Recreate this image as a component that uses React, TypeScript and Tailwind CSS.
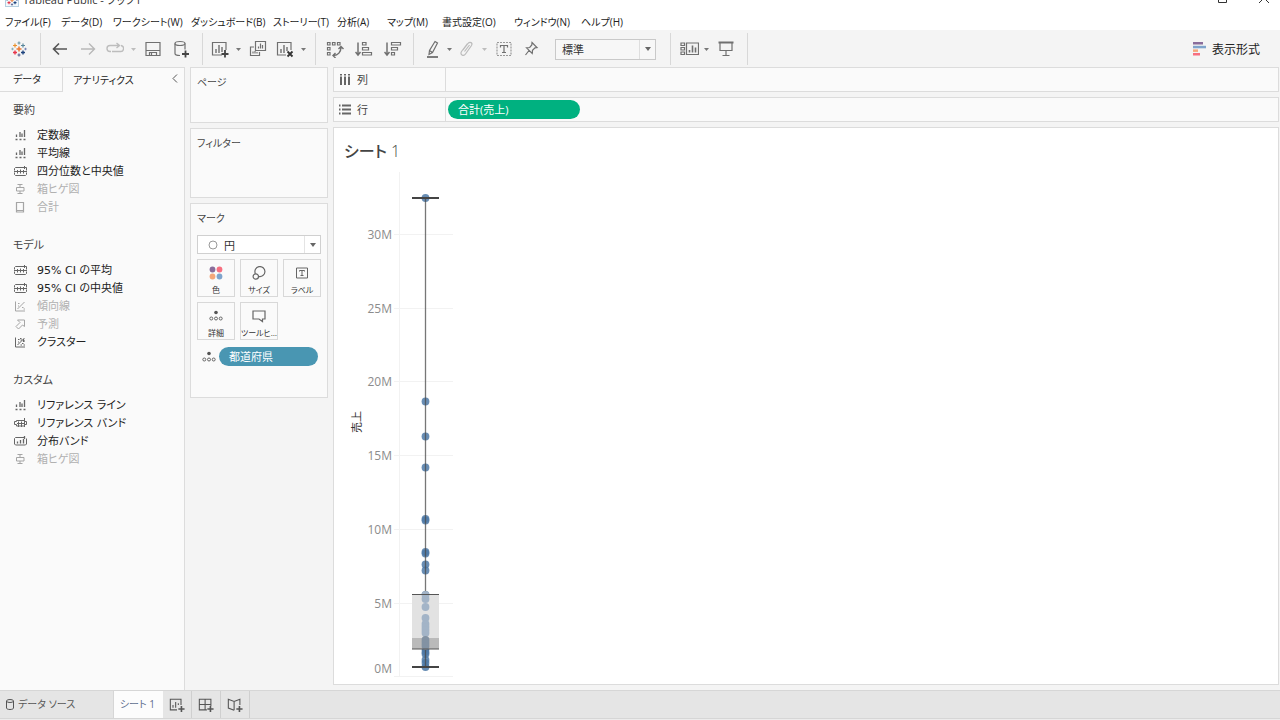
import React from 'react';

const menus = [
  { label: 'ファイル(F)', width: 'w-14' },
  { label: 'データ(D)', width: 'w-[52px]' },
  { label: 'ワークシート(W)', width: 'w-[78px]' },
  { label: 'ダッシュボード(B)', width: 'w-[82px]' },
  { label: 'ストーリー(T)', width: 'w-16' },
  { label: '分析(A)', width: 'w-[50px]' },
  { label: 'マップ(M)', width: 'w-[55px]' },
  { label: '書式設定(O)', width: 'w-[72px]' },
  { label: 'ウィンドウ(N)', width: 'w-[67px]' },
  { label: 'ヘルプ(H)', width: 'w-14' },
];

type Item = { label: string; icon: string; disabled?: boolean };

const sections: { title: string; items: Item[] }[] = [
  {
    title: '要約',
    items: [
      { label: '定数線', icon: 'line' },
      { label: '平均線', icon: 'line' },
      { label: '四分位数と中央値', icon: 'quartile' },
      { label: '箱ヒゲ図', icon: 'box', disabled: true },
      { label: '合計', icon: 'total', disabled: true },
    ],
  },
  {
    title: 'モデル',
    items: [
      { label: '95% CI の平均', icon: 'quartile' },
      { label: '95% CI の中央値', icon: 'quartile' },
      { label: '傾向線', icon: 'trend', disabled: true },
      { label: '予測', icon: 'forecast', disabled: true },
      { label: 'クラスター', icon: 'cluster' },
    ],
  },
  {
    title: 'カスタム',
    items: [
      { label: 'リファレンス ライン', icon: 'line' },
      { label: 'リファレンス バンド', icon: 'band' },
      { label: '分布バンド', icon: 'distribution' },
      { label: '箱ヒゲ図', icon: 'box', disabled: true },
    ],
  },
];

function AnalyticsIcon({ name }: { name: string }) {
  return (
    <svg width="14" height="12" viewBox="0 0 14 12" fill="none" stroke="currentColor" className="shrink-0">
      {name === 'line' && (
        <path d="M2.500 4.500v2.500M6 2v5M8 3.500V7M10.500 0v7M1.500 9.500h2M5.500 9.500h2M9.500 9.500h2" strokeWidth="1.300" />
      )}
      {name === 'quartile' && (
        <>
          <path d="M.500 4.500V2.500l1-1h11v3M0 5.500h13M.500 6.500v2l1 1h10l1-1v-2" />
          <path d="M3.500 4v3.500M6.500 3.500v4M9.500 4v3.500M10.500 0v3" />
        </>
      )}
      {name === 'box' && <path d="M3.500 .5h5M6 .5V3M2.500 3.500h7.500v3.500H2.500zM6 7v2.500M3.500 9.500h5" />}
      {name === 'total' && <path d="M2.500 .5h7v9.500h-7zM2.500 8.500h7" strokeWidth="1.200" />}
      {(name === 'trend' || name === 'cluster') && (
        <>
          <path d="M1.500 .5v9.500H11" />
          <path d="M3.500 8l7-7M4 2.500h1.500M8 6.500h1.500M9.500 8H11M4 5h1" />
          {name === 'cluster' && <path d="M6 1.500h1.500M6.500 3H8M9 4h2M6.500 8H8M9.500 2v3" strokeWidth="1.200" />}
        </>
      )}
      {name === 'forecast' && <path d="M3.500 1h7v6.500L8.500 6l-4 4L2 7.500l4-4z" />}
      {name === 'band' && (
        <>
          <path d="M2.500 2.500h8v1h2v3h-2v1.500h-8V6.500h-2v-3h2zM3 5.500h8" />
          <path d="M4.500 3.500v5.500M7.500 3.500v5.500M10.500 0v9" />
        </>
      )}
      {name === 'distribution' && (
        <>
          <path d="M10 1.500H1.500l-1 1V8l1 1h10l1-1V2.500" />
          <path d="M3.500 5.500v2M6.500 4v3.500M9.500 3v4.500M10.500 0v3" strokeWidth="1.300" />
        </>
      )}
    </svg>
  );
}

function Icon({ children, size = 18 }: { children: React.ReactNode; size?: number }) {
  return (
    <svg width={size} height={size} viewBox="0 0 18 18" fill="none" stroke="currentColor" strokeWidth="1.200" className="shrink-0">
      {children}
    </svg>
  );
}

function Tool({ label, className = 'w-7', children }: { label: string; className?: string; children: React.ReactNode }) {
  return (
    <button type="button" aria-label={label} className={`flex h-7 items-center justify-center ${className}`}>
      {children}
    </button>
  );
}

function Caret({ label, faded = false }: { label: string; faded?: boolean }) {
  return (
    <button type="button" aria-label={label} className={`flex h-7 w-[11px] items-center justify-center ${faded ? 'text-[#bdbdbd]' : 'text-[#777]'}`}>
      <svg width="5" height="3" viewBox="0 0 5 3"><path d="M0 0h5L2.500 3z" fill="currentColor" /></svg>
    </button>
  );
}

// Cluster of plus signs used in the title bar and the toolbar
function Logo() {
  return (
    <svg width="16" height="16" viewBox="0 0 16 16" fill="none" strokeWidth="1.200">
      <path d="M8 5.500v5M5.500 8h5" stroke="#eb7a33" strokeWidth="1.500" />
      <path d="M8 .5v3M6.500 2h3" stroke="#7099a6" />
      <path d="M8 12.500v3M6.500 14h3" stroke="#5b6591" />
      <path d="M4 2.500v4M2 4.500h4" stroke="#eb912c" />
      <path d="M12 2.500v4M10 4.500h4" stroke="#59879b" />
      <path d="M4 9.500v4M2 11.500h4" stroke="#e8364b" strokeWidth="1.400" />
      <path d="M12 9.500v4M10 11.500h4" stroke="#1f447e" strokeWidth="1.400" />
      <path d="M1.500 6.800v2.400M.3 8h2.400" stroke="#8aaebb" />
      <path d="M14.500 6.800v2.400M13.300 8h2.400" stroke="#7b87b5" />
    </svg>
  );
}

function DetailIcon() {
  return (
    <svg width="14" height="14" viewBox="0 0 14 14" fill="none" stroke="#666">
      <circle cx="7" cy="3.500" r="1.800" fill="#555" stroke="none" />
      <circle cx="2.300" cy="9.500" r="1.500" />
      <circle cx="7" cy="9.500" r="1.500" />
      <circle cx="11.700" cy="9.500" r="1.500" />
    </svg>
  );
}

function Toolbar() {
  const group = 'flex h-8 items-center border-r border-[#d8d8d8]';
  return (
    <div className="flex h-[37px] shrink-0 items-center bg-[#f4f4f4] pt-px text-[#707070]">
      <div className={`${group} w-[41px]`}>
        <Tool label="スタート ページ" className="w-[37px]"><Logo /></Tool>
      </div>
      <div className={`${group} pl-[5px] pr-[7px]`}>
        <Tool label="元に戻す">
          <Icon><path d="M16 9H2.500M8 3.500L2.500 9 8 14.500" stroke="#555" strokeWidth="1.600" /></Icon>
        </Tool>
        <Tool label="やり直し">
          <Icon><path d="M2 9h13.500M10 3.500L15.500 9 10 14.500" stroke="#b8b8b8" strokeWidth="1.400" /></Icon>
        </Tool>
        <Tool label="再生" className="w-[26px]">
          <Icon><path d="M5 11.500H4a3 3 0 0 1 0-6h9M10.500 3l3 2.500-3 2.500M15 5.500a3 3 0 0 1-1 6H6" stroke="#bdbdbd" strokeWidth="1.400" /></Icon>
        </Tool>
        <Caret label="再生メニュー" faded />
        <Tool label="保存">
          <Icon><path d="M2 2.500h14v13H2zM2 10.500h14M5.500 15.500v-3h7v3M7.500 13v2" /></Icon>
        </Tool>
        <Tool label="新しいデータ ソース">
          <Icon>
            <ellipse cx="8" cy="3.500" rx="5" ry="2" />
            <path d="M3 3.500v10c0 1.200 2 2 5 2M13 3.500v6" />
            <path d="M13.500 10.500v7M10 14h7" stroke="#444" strokeWidth="1.800" />
          </Icon>
        </Tool>
      </div>
      <div className={`${group} pl-1 pr-1.5`}>
        <Tool label="新しいワークシート" className="w-[26px]">
          <Icon>
            <path d="M11 15H1.500V2.500H15V10" />
            <path d="M5 13V9M8 13V5M11 12V7" strokeWidth="1.400" />
            <path d="M14 10v7.500M10.500 14h7" stroke="#444" strokeWidth="1.800" />
          </Icon>
        </Tool>
        <Caret label="新規メニュー" />
        <Tool label="複製">
          <Icon>
            <path d="M6.500 1.500h10v9h-10zM5 7H1.500v8.500h9V12" />
            <path d="M9.500 8.500V6.500M11.500 8.500v-5M13.500 8.500V5M4 13.500v-2M6 13.500V11M8 13.500V12" />
          </Icon>
        </Tool>
        <Tool label="シートのクリア" className="w-[26px]">
          <Icon>
            <path d="M10 15H1.500V2.500H15V10" />
            <path d="M5 13V9M8 13V5M11 11V7" strokeWidth="1.400" />
            <path d="M11.500 11.500l5 5M16.500 11.500l-5 5" stroke="#333" strokeWidth="1.800" />
          </Icon>
        </Tool>
        <Caret label="クリア メニュー" />
      </div>
      <div className={`${group} pl-1 pr-1.5`}>
        <Tool label="行と列の交換" className="w-[29px]">
          <Icon>
            <path d="M1.500 2.500H4V5H1.500zM6.500 2.500H9V5H6.500zM11.500 2.500H14V5h-2.500zM1.500 7.500H4V10H1.500zM1.500 12.500H4V15H1.500z" />
            <path d="M15 7c0 5-3 8.500-7.500 8.500M12.500 9L15 6.500 17.500 9M9.500 13L7 15.500 9.500 18" strokeWidth="1.400" />
          </Icon>
        </Tool>
        <Tool label="昇順で並べ替え" className="w-[29px]">
          <Icon>
            <path d="M3 2.500v12M.500 12L3 15l2.500-3" strokeWidth="1.500" />
            <path d="M7.500 2.500h3.500v2.500H7.500zM7.500 7.500h6V10h-6zM7.500 12.500h9V15h-9z" />
          </Icon>
        </Tool>
        <Tool label="降順で並べ替え" className="w-[29px]">
          <Icon>
            <path d="M3 2.500v12M.500 12L3 15l2.500-3" strokeWidth="1.500" />
            <path d="M7.500 2.500h9V5h-9zM7.500 7.500h6V10h-6zM7.500 12.500h3V15h-3z" />
          </Icon>
        </Tool>
      </div>
      <div className={`${group} pl-1.5 pr-3.5`}>
        <Tool label="ハイライト" className="w-6">
          <Icon>
            <path d="M12 1.500l2.500 1.500-5 9.500-3.500 2 .5-4zM6.500 10.500l3 2" />
            <path d="M4 17h11" strokeWidth="1.800" />
          </Icon>
        </Tool>
        <Caret label="ハイライト メニュー" />
        <Tool label="メンバーのグループ化" className="w-6">
          <Icon>
            <path d="M5 10l5-6.500c2-2.500 5-.5 3.500 2L7.500 14c-2 3-6 .5-4-2.500l6-8M6.500 11.500l5-6.500" stroke="#bbb" />
          </Icon>
        </Tool>
        <Caret label="グループ メニュー" faded />
        <Tool label="マーク ラベルの表示">
          <Icon>
            <path d="M2 2.500h14v13H2z" strokeDasharray="2 1" stroke="#999" />
            <path d="M5.500 7.500V5.500h7v2M9 5.500v7M7 12.500h4" />
          </Icon>
        </Tool>
        <Tool label="軸の固定" className="w-[26px]">
          <Icon><path d="M10 2.500l5 5-2 .3-2.500 2.500-.3 3.200L4.500 7.800l3.200-.3L9.800 5zM7 10.500L3.500 15" /></Icon>
        </Tool>
        <label className="relative ml-[11px] flex items-center">
          <span className="sr-only">表示サイズ</span>
          <select className="h-[21px] w-[101px] appearance-none rounded-none border border-[#c9c9c9] bg-[#f7f7f7] py-0 pl-1.5 font-['Noto_Sans_CJK_JP',sans-serif] text-[11px] leading-4 text-[#333]">
            <option>標準</option>
            <option>幅を合わせる</option>
            <option>高さを合わせる</option>
            <option>ビュー全体</option>
          </select>
          <span className="pointer-events-none absolute right-px flex h-[19px] w-4 items-center justify-center border-l border-[#dedede]">
            <svg width="6" height="4" viewBox="0 0 6 4"><path d="M0 0h6L3 4z" fill="#666" /></svg>
          </span>
        </label>
      </div>
      <div className={`${group} pl-1.5 pr-[7px]`}>
        <Tool label="カードの表示/非表示" className="w-6">
          <svg width="19" height="16" viewBox="0 0 19 16" fill="none" stroke="currentColor" strokeWidth="1.200">
            <path d="M1 2h3.500v2.500H1zM1 6.500h3.500V9H1zM1 11h3.500v2.500H1zM6.500 2h12v11.500h-12z" />
            <path d="M9.500 11.500V9M12.500 11.500v-7M15.500 11.500v-5" strokeWidth="1.600" />
          </svg>
        </Tool>
        <Caret label="カード メニュー" />
        <Tool label="プレゼンテーション モード">
          <Icon>
            <path d="M1.500 2.500h15" strokeWidth="2" />
            <path d="M3 3v7.500h12V3M9 10.500v5M5.500 15.500h7" />
          </Icon>
        </Tool>
      </div>
      <button type="button" className="ml-auto flex items-center gap-[5px] pr-5 text-xs text-[#222]">
        <svg width="14" height="14" viewBox="0 0 14 14">
          <path d="M0 0h10v2.500H0z" fill="#8a6d9b" />
          <path d="M0 3.800h13v2.500H0z" fill="#7fa4cc" />
          <path d="M0 7.400h5v2.500H0z" fill="#f5a77a" />
          <path d="M0 11h7v2.500H0z" fill="#f76f80" />
        </svg>
        <span className="pt-0.5">表示形式</span>
      </button>
    </div>
  );
}

function Sidebar() {
  return (
    <aside className="w-[185px] shrink-0 border-r border-t border-[#dcdcdc] bg-[#fafafa]">
      <div className="flex h-6 text-[10px] text-[#222]">
        <button type="button" className="w-[63px] border-b border-r border-[#dcdcdc] pr-2">データ</button>
        <button type="button" className="pl-2.5">アナリティクス</button>
        <button type="button" aria-label="折りたたむ" className="ml-auto pb-1 pr-1.5 text-[#555]">
          <svg width="6" height="9" viewBox="0 0 6 9" fill="none" stroke="currentColor"><path d="M5 .5l-4 4 4 4" /></svg>
        </button>
      </div>
      <div className="flex flex-col gap-[19px] pt-[9px]">
        {sections.map((section) => (
          <section key={section.title} className="flex flex-col gap-2">
            <h2 className="pl-[13px] text-[11px] leading-[18px] text-[#444]">{section.title}</h2>
            <ul>
              {section.items.map((item) => (
                <li key={item.label}>
                  <button
                    type="button"
                    disabled={item.disabled}
                    className={`flex h-[18px] items-center gap-[9px] whitespace-nowrap pl-3.5 font-['DejaVu_Sans','Noto_Sans_CJK_JP',sans-serif] text-[11px] ${item.disabled ? 'text-[#b0b0b0]' : 'text-[#222]'}`}
                  >
                    <span className={item.disabled ? 'text-[#a5a5a5]' : 'text-[#666]'}>
                      <AnalyticsIcon name={item.icon} />
                    </span>
                    {item.label}
                  </button>
                </li>
              ))}
            </ul>
          </section>
        ))}
      </div>
    </aside>
  );
}

function MarkButton({ label, children }: { label: string; children: React.ReactNode }) {
  return (
    <button type="button" className="flex h-[38px] flex-col items-center justify-between overflow-hidden whitespace-nowrap border border-[#d8d8d8] bg-[#fafafa] pt-1.5 text-[8px] leading-3 text-[#333]">
      {children}
      {label}
    </button>
  );
}

function Cards() {
  const card = 'border border-[#dcdcdc] bg-[#fafafa] px-1.5 pt-1.5 text-[10px] leading-4 text-[#444]';
  return (
    <div className="flex w-[138px] shrink-0 flex-col gap-[5px]">
      <section className={`${card} h-14`}><h2>ページ</h2></section>
      <section className={`${card} h-[70px]`}><h2>フィルター</h2></section>
      <section className={`${card} pb-[31px]`}>
        <h2>マーク</h2>
        <label className="relative mt-[9px] flex items-center">
          <span className="sr-only">マーク タイプ</span>
          <select className="h-[19px] w-full appearance-none border border-[#d0d0d0] bg-white py-0 pl-[26px] font-['Noto_Sans_CJK_JP',sans-serif] text-[11px] leading-4 text-[#333]">
            <option>円</option>
            <option>棒</option>
            <option>線</option>
          </select>
          <svg width="10" height="10" viewBox="0 0 10 10" className="pointer-events-none absolute left-[11px]">
            <circle cx="5" cy="5" r="4" fill="none" stroke="#999" />
          </svg>
          <span className="pointer-events-none absolute right-px flex h-[17px] w-4 items-center justify-center border-l border-[#e4e4e4]">
            <svg width="6" height="4" viewBox="0 0 6 4"><path d="M0 0h6L3 4z" fill="#666" /></svg>
          </span>
        </label>
        <div className="mt-[5px] grid grid-cols-3 gap-[5px]">
          <MarkButton label="色">
            <svg width="14" height="14" viewBox="0 0 14 14">
              <circle cx="3.500" cy="3.500" r="2.900" fill="#8a6d9b" />
              <circle cx="10.500" cy="3.500" r="2.900" fill="#f76f80" />
              <circle cx="3.500" cy="10.500" r="2.900" fill="#f5a77a" />
              <circle cx="10.500" cy="10.500" r="2.900" fill="#7fa4cc" />
            </svg>
          </MarkButton>
          <MarkButton label="サイズ">
            <svg width="14" height="14" viewBox="0 0 14 14" fill="none" stroke="#666" strokeWidth="1.200">
              <path d="M3.400 7.700a5 5 0 1 1 3.200 2.700" />
              <circle cx="3.800" cy="10.500" r="2.700" />
            </svg>
          </MarkButton>
          <MarkButton label="ラベル">
            <svg width="14" height="14" viewBox="0 0 14 14" fill="none" stroke="#666">
              <path d="M1.500 2h11v10h-11zM4.500 5.500v-1h5v1M7 4.500v5M5.500 9.500h3" />
            </svg>
          </MarkButton>
          <MarkButton label="詳細"><DetailIcon /></MarkButton>
          <MarkButton label="ツールヒ…">
            <svg width="14" height="14" viewBox="0 0 14 14" fill="none" stroke="#666" strokeWidth="1.200">
              <path d="M1 2h12v8h-2.500v2.500L7 10H1z" />
            </svg>
          </MarkButton>
        </div>
        <div className="mt-[7px] flex items-center gap-[3px] pl-[5px] pr-[3px]">
          <DetailIcon />
          <button type="button" className="h-[19px] flex-1 rounded-full bg-[#4996b2] pl-2.5 text-left text-[11px] text-white">都道府県</button>
        </div>
      </section>
    </div>
  );
}

function Shelf({ label, icon, children }: { label: string; icon: React.ReactNode; children?: React.ReactNode }) {
  return (
    <div className="flex h-[25px] shrink-0 items-center border border-[#dcdcdc] bg-[#fafafa]">
      <div className="flex h-full w-28 items-center gap-1.5 border-r border-[#dcdcdc] pl-[5px] text-[11px] text-[#444]">
        {icon}
        <span className="pt-0.5">{label}</span>
      </div>
      {children}
    </div>
  );
}

const ticks = [
  { label: '30M', y: 65 },
  { label: '25M', y: 139 },
  { label: '20M', y: 212 },
  { label: '15M', y: 286 },
  { label: '10M', y: 360 },
  { label: '5M', y: 434 },
];

const marks = [
  29, 232.500, 267.500, 298.500, 350, 351.500, 383, 384.500, 395.500, 401.500, 426, 429.500, 438, 449, 453,
  458, 461, 464, 471, 474, 477, 480, 483, 485, 491, 494, 498,
];
const innerMarks = [426, 430, 438, 449, 455, 458, 461, 464, 471, 474, 477];

function BoxPlot() {
  return (
    <svg width="130" height="512" viewBox="0 0 130 512" className="font-['Open_Sans',sans-serif]" role="img" aria-label="売上の箱ヒゲ図">
      {ticks.map((tick) => (
        <g key={tick.label}>
          <path d={`M60 ${tick.y + 0.5}h59`} stroke="#f2f2f2" />
          <text x="58" y={tick.y + 5} textAnchor="end" fontSize="12" fill="#8c8c8c">{tick.label}</text>
        </g>
      ))}
      <text x="58" y="504" textAnchor="end" fontSize="12" fill="#8c8c8c">0M</text>
      <path d="M60 507.500h59M65.500 3v505" stroke="#f2f2f2" fill="none" />
      <text transform="translate(27 264) rotate(-90)" fontSize="11" fill="#333" className="font-['Noto_Sans_CJK_JP',sans-serif]">売上</text>
      {marks.map((y) => <circle key={y} cx="91.500" cy={y} r="3.900" fill="#4e79a7" fillOpacity="0.850" />)}
      <path d="M91.500 29v397M91.500 480v18" stroke="#4a4a4a" strokeOpacity="0.750" strokeWidth="1.300" />
      <path d="M78 425h27v44H78z" fill="#e2e2e2" />
      <path d="M78 469h27v11H78z" fill="#bababa" />
      {innerMarks.map((y) => <circle key={y} cx="91.500" cy={y} r="3.900" fill={y > 468 ? '#8292a3' : '#a3b4c7'} />)}
      <path d="M78 425.500h27M78 480h27" stroke="#555" strokeWidth="1.200" />
      <path d="M78 29h27M78 498h27" stroke="#444" strokeWidth="1.800" />
    </svg>
  );
}

function Worksheet() {
  return (
    <main className="flex min-w-0 flex-1 flex-col gap-[5px]">
      <Shelf
        label="列"
        icon={<svg width="12" height="12" viewBox="0 0 12 12" stroke="#666" strokeWidth="2"><path d="M2 0v1.500M6 0v1.500M10 0v1.500M2 2.500V11M6 2.500V11M10 2.500V11" /></svg>}
      />
      <Shelf
        label="行"
        icon={<svg width="12" height="12" viewBox="0 0 12 12" stroke="#666" strokeWidth="2"><path d="M0 1.500h1.500M0 5.500h1.500M0 9.500h1.500M3 1.500h9M3 5.500h9M3 9.500h9" /></svg>}
      >
        <button type="button" className="ml-0.5 h-[19px] w-[132px] rounded-full bg-[#00b180] pl-2.5 pt-0.5 text-left text-[11px] text-white">合計(売上)</button>
      </Shelf>
      <section className="flex-1 overflow-hidden border border-[#dcdcdc] bg-white">
        <h1 className="pl-2.5 pt-[11px] text-base font-medium leading-6 text-[#444]">シート <span className="font-light">1</span></h1>
        <div className="pt-1.5"><BoxPlot /></div>
      </section>
    </main>
  );
}

function SheetTabs() {
  const add = 'flex w-[29px] items-center justify-center border-r border-[#cfcfcf]';
  return (
    <nav className="flex h-[29px] shrink-0 border-y border-[#d6d6d6] bg-[#e5e5e5] text-[10px] text-[#555]">
      <button type="button" className="flex w-[114px] items-center gap-1 border-r border-[#d6d6d6] pl-1.5">
        <svg width="8" height="11" viewBox="0 0 8 11" fill="none" stroke="currentColor">
          <ellipse cx="4" cy="2" rx="3.500" ry="1.500" />
          <path d="M.5 2v7c0 2 7 2 7 0V2" />
        </svg>
        データ ソース
      </button>
      <button type="button" className="w-[49px] bg-[#fcfcfc] pr-0.5 text-[#5f6f8f]">シート 1</button>
      <button type="button" aria-label="新しいワークシート" className={add}>
        <Icon size={16}><path d="M9 14.500H1.500v-12h12V9M4.500 12V9M7.500 12V5.500M10.500 9V7" /><path d="M14 10v7M10.500 13.500h7" strokeWidth="1.800" /></Icon>
      </button>
      <button type="button" aria-label="新しいダッシュボード" className={add}>
        <Icon size={16}><path d="M10 14.500H1.500v-12h13V10M1.500 8.500h13M8 2.500v12" /><path d="M14 10v7M10.500 13.500h7" strokeWidth="1.800" /></Icon>
      </button>
      <button type="button" aria-label="新しいストーリー" className={add}>
        <Icon size={16}><path d="M8 15l-6.500-2.500v-10L8 5l6.500-2.500V9M8 5v10" /><path d="M14 10v7M10.500 13.500h7" strokeWidth="1.800" /></Icon>
      </button>
    </nav>
  );
}

export default function App() {
  return (
    <div
      lang="ja"
      className="flex h-screen min-h-[560px] flex-col overflow-hidden bg-[#f4f4f4] font-['Open_Sans','Noto_Sans_CJK_JP',sans-serif] [font-feature-settings:'palt']"
    >
      <header className="flex h-2 shrink-0 items-end overflow-hidden bg-white pl-[5px] text-[11px] leading-4 text-[#333]">
        <span className="flex h-4 items-center gap-1">
          <span className="flex size-3.5 items-center justify-center overflow-hidden border border-[#b5cfe0] bg-[#f2f8fc]"><Logo /></span>
          Tableau Public - ブック1
        </span>
        <span className="ml-auto flex h-5 items-center gap-8 pr-[11px] text-[#333]">
          <svg width="9" height="10" viewBox="0 0 9 10" fill="none" stroke="currentColor"><path d="M.5.5h8v9h-8z" /></svg>
          <svg width="10" height="10" viewBox="0 0 10 10" fill="none" stroke="currentColor"><path d="M0 0l10 10M10 0L0 10" /></svg>
        </span>
      </header>
      <nav className="flex h-[22px] shrink-0 items-center bg-white pl-[5px] text-[10px] text-[#222]">
        {menus.map((menu) => (
          <button key={menu.label} type="button" className={`${menu.width} shrink-0 whitespace-nowrap pt-1.5 text-left`}>{menu.label}</button>
        ))}
      </nav>
      <Toolbar />
      <div className="flex min-h-0 flex-1">
        <Sidebar />
        <div className="flex min-w-0 flex-1 gap-[5px] pb-[5px] pl-[5px] pr-px">
          <Cards />
          <Worksheet />
        </div>
      </div>
      <SheetTabs />
      <footer className="h-px shrink-0 bg-[#ececec]" />
    </div>
  );
}
